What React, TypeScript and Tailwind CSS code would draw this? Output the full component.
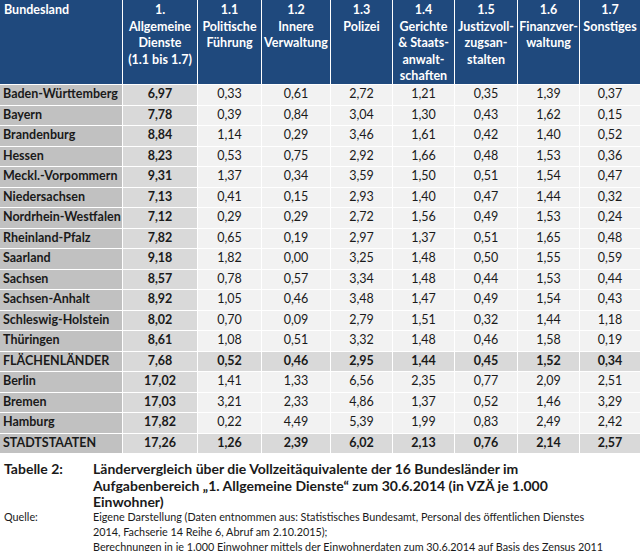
import React from "react";

type Row = { name: string; vals: string[]; sum?: boolean };

const rows: Row[] = [
  { name: "Baden-Württemberg", vals: ["6,97", "0,33", "0,61", "2,72", "1,21", "0,35", "1,39", "0,37"] },
  { name: "Bayern", vals: ["7,78", "0,39", "0,84", "3,04", "1,30", "0,43", "1,62", "0,15"] },
  { name: "Brandenburg", vals: ["8,84", "1,14", "0,29", "3,46", "1,61", "0,42", "1,40", "0,52"] },
  { name: "Hessen", vals: ["8,23", "0,53", "0,75", "2,92", "1,66", "0,48", "1,53", "0,36"] },
  { name: "Meckl.-Vorpommern", vals: ["9,31", "1,37", "0,34", "3,59", "1,50", "0,51", "1,54", "0,47"] },
  { name: "Niedersachsen", vals: ["7,13", "0,41", "0,15", "2,93", "1,40", "0,47", "1,44", "0,32"] },
  { name: "Nordrhein-Westfalen", vals: ["7,12", "0,29", "0,29", "2,72", "1,56", "0,49", "1,53", "0,24"] },
  { name: "Rheinland-Pfalz", vals: ["7,82", "0,65", "0,19", "2,97", "1,37", "0,51", "1,65", "0,48"] },
  { name: "Saarland", vals: ["9,18", "1,82", "0,00", "3,25", "1,48", "0,50", "1,55", "0,59"] },
  { name: "Sachsen", vals: ["8,57", "0,78", "0,57", "3,34", "1,48", "0,44", "1,53", "0,44"] },
  { name: "Sachsen-Anhalt", vals: ["8,92", "1,05", "0,46", "3,48", "1,47", "0,49", "1,54", "0,43"] },
  { name: "Schleswig-Holstein", vals: ["8,02", "0,70", "0,09", "2,79", "1,51", "0,32", "1,44", "1,18"] },
  { name: "Thüringen", vals: ["8,61", "1,08", "0,51", "3,32", "1,48", "0,46", "1,58", "0,19"] },
  { name: "FLÄCHENLÄNDER", vals: ["7,68", "0,52", "0,46", "2,95", "1,44", "0,45", "1,52", "0,34"], sum: true },
  { name: "Berlin", vals: ["17,02", "1,41", "1,33", "6,56", "2,35", "0,77", "2,09", "2,51"] },
  { name: "Bremen", vals: ["17,03", "3,21", "2,33", "4,86", "1,37", "0,52", "1,46", "3,29"] },
  { name: "Hamburg", vals: ["17,82", "0,22", "4,49", "5,39", "1,99", "0,83", "2,49", "2,42"] },
  { name: "STADTSTAATEN", vals: ["17,26", "1,26", "2,39", "6,02", "2,13", "0,76", "2,14", "2,57"], sum: true },
];

const headers: string[][] = [
  ["1.", "Allgemeine", "Dienste", "(1.1 bis 1.7)"],
  ["1.1", "Politische", "Führung"],
  ["1.2", "Innere", "Verwaltung"],
  ["1.3", "Polizei"],
  ["1.4", "Gerichte", "& Staats-", "anwalt-", "schaften"],
  ["1.5", "Justizvoll-", "zugsan-", "stalten"],
  ["1.6", "Finanzver-", "waltung"],
  ["1.7", "Sonstiges"],
];

export default function App() {
  return (
    <div
      className="w-[640px] h-[551px] bg-white overflow-hidden text-[#1a1a1a]"
      style={{ fontFamily: "Lato, 'Noto Sans', sans-serif" }}
    >
      <div className="grid grid-cols-[122px_74px_63px_68px_61px_61px_62px_61px_60px] grid-rows-[84px_repeat(18,19.5px)] gap-px bg-white">
        <div className="bg-[#1f497d] text-white font-bold text-[12.5px] leading-[16.5px] pl-[4px] pt-[2px]">
          Bundesland
        </div>
        {headers.map((h, i) => (
          <div
            key={i}
            className="bg-[#1f497d] text-white font-bold text-[12.5px] leading-[16.5px] pt-[2px] flex flex-col items-center text-center whitespace-nowrap"
          >
            {h.map((l, j) => (
              <span key={j}>{l}</span>
            ))}
          </div>
        ))}
        {rows.map((r) => (
          <React.Fragment key={r.name}>
            <div className="bg-[#c1c1c1] font-bold text-[12.5px] pl-[3px] flex items-center whitespace-nowrap">
              {r.name}
            </div>
            {r.vals.map((v, i) => (
              <div
                key={i}
                className={
                  "flex items-center justify-center text-[12.5px] " +
                  (r.sum || i === 0 ? "font-bold " : "") +
                  (r.sum || i === 0 ? "bg-[#d9d9d9]" : "bg-[#f2f2f2]")
                }
              >
                {v}
              </div>
            ))}
          </React.Fragment>
        ))}
      </div>
      <div className="mt-[8px] flex">
        <div className="w-[93px] shrink-0 pl-[4px] font-bold text-[14px] leading-[16.5px]">Tabelle 2:</div>
        <div className="font-bold text-[14px] leading-[16.5px] whitespace-nowrap">
          <div>Ländervergleich über die Vollzeitäquivalente der 16 Bundesländer im</div>
          <div>Aufgabenbereich „1. Allgemeine Dienste“ zum 30.6.2014 (in VZÄ je 1.000</div>
          <div>Einwohner)</div>
        </div>
      </div>
      <div className="flex mt-[-2px]">
        <div className="w-[93px] shrink-0 pl-[4px] text-[10.8px] leading-[15px]">Quelle:</div>
        <div className="text-[10.8px] leading-[15px] whitespace-nowrap">
          <div>Eigene Darstellung (Daten entnommen aus: Statistisches Bundesamt, Personal des öffentlichen Dienstes</div>
          <div>2014, Fachserie 14 Reihe 6, Abruf am 2.10.2015);</div>
          <div>Berechnungen in je 1.000 Einwohner mittels der Einwohnerdaten zum 30.6.2014 auf Basis des Zensus 2011</div>
        </div>
      </div>
    </div>
  );
}
